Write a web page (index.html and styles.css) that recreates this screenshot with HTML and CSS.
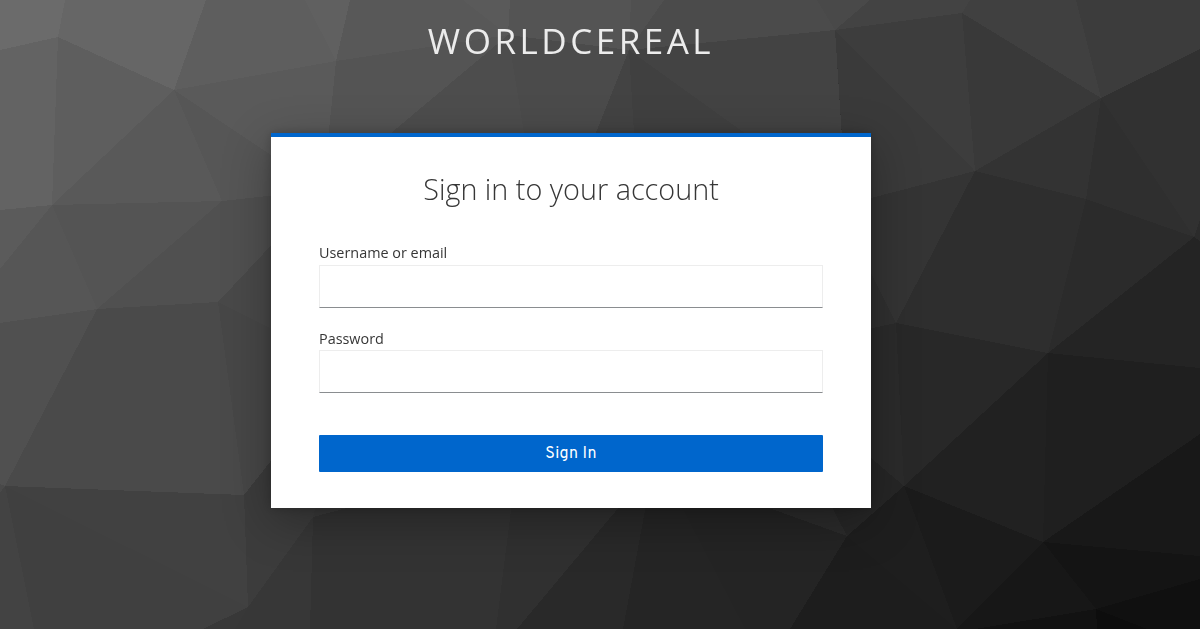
FILE: index.html
```html
<!DOCTYPE html>
<html lang="en">
<head>
<meta charset="utf-8">
<title>Sign in to WorldCereal</title>
<link rel="stylesheet" href="styles.css">
</head>
<body>
<svg class="backdrop" viewBox="0 0 1200 629" aria-hidden="true">
<g class="facets">
<path fill="#6b6b6b" d="M0 0H65L58 37L0 50Z"/>
<path fill="#666" d="M65 0H206L174 90L58 37Z"/>
<path fill="#5e5e5e" d="M206 0H305L336 61L174 90Z"/>
<path fill="#606060" d="M305 0H350L336 61Z"/>
<path fill="#585858" d="M350 0H463L508 35L336 61Z"/>
<path fill="#5a5a5a" d="M463 0H510L508 35Z"/>
<path fill="#545454" d="M510 0H631L629 50L508 35Z"/>
<path fill="#505050" d="M631 0H664L629 50Z"/>
<path fill="#4b4b4b" d="M664 0H817L835 30L629 50Z"/>
<path fill="#494949" d="M817 0H870L835 30Z"/>
<path fill="#434343" d="M870 0H970L962 13L835 30Z"/>
<path fill="#404040" d="M970 0H1076L1101 98L962 13Z"/>
<path fill="#3c3c3c" d="M1076 0H1200V49L1101 98Z"/>
<path fill="#636363" d="M0 50L58 37L52 205L0 210Z"/>
<path fill="#5e5e5e" d="M58 37L174 90L52 205Z"/>
<path fill="#595959" d="M174 90L222 201L52 205Z"/>
<path fill="#5a5a5a" d="M174 90L336 61L323 190Z"/>
<path fill="#565656" d="M174 90L323 190L222 201Z"/>
<path fill="#545454" d="M336 61L508 35L323 190Z"/>
<path fill="#4d4d4d" d="M508 35L323 190L535 200Z"/>
<path fill="#4b4b4b" d="M508 35L629 50L569 200H535Z"/>
<path fill="#434343" d="M629 50L569 200H638Z"/>
<path fill="#404040" d="M629 50L638 200H838Z"/>
<path fill="#434343" d="M629 50L835 30L846 200H838Z"/>
<path fill="#3a3a3a" d="M835 30L975 171L871 198H846Z"/>
<path fill="#3d3d3d" d="M835 30L962 13L975 171Z"/>
<path fill="#393939" d="M962 13L1101 98L975 171Z"/>
<path fill="#333" d="M1101 98L1086 199L975 171Z"/>
<path fill="#2f2f2f" d="M1101 98L1194 237L1086 199Z"/>
<path fill="#313131" d="M1101 98L1200 49V220L1194 237Z"/>
<path fill="#5b5b5b" d="M0 210L52 205L0 269Z"/>
<path fill="#565656" d="M52 205L97 309L0 323V269Z"/>
<path fill="#545454" d="M52 205L222 201L97 309Z"/>
<path fill="#505050" d="M222 201L323 190L218 302L97 309Z"/>
<path fill="#505050" d="M0 323L97 309L5 486L0 484Z"/>
<path fill="#4a4a4a" d="M97 309L218 302L244 495L5 486Z"/>
<path fill="#494949" d="M218 302L323 190V354Z"/>
<path fill="#474747" d="M218 302L323 354V395L244 495Z"/>
<path fill="#494949" d="M0 484L5 486L0 493Z"/>
<path fill="#434343" d="M0 493L5 486L34 629H0Z"/>
<path fill="#404040" d="M5 486L248 607L203 629H34Z"/>
<path fill="#414141" d="M5 486L244 495L248 607Z"/>
<path fill="#3c3c3c" d="M244 495L313 517L248 607Z"/>
<path fill="#3c3c3c" d="M244 495L323 395V480L313 517Z"/>
<path fill="#383838" d="M248 607L235 629H203Z"/>
<path fill="#373737" d="M248 607L313 517L310 629H235Z"/>
<path fill="#3a3a3a" d="M313 517L323 480H410L400 494Z"/>
<path fill="#333" d="M313 517L400 494H513L496 629H310Z"/>
<path fill="#303030" d="M513 494H630L517 629H496Z"/>
<path fill="#292929" d="M630 494H648L623 629H517Z"/>
<path fill="#252525" d="M648 494H675L745 629H623Z"/>
<path fill="#242424" d="M675 494H730L847 536L790 629H745Z"/>
<path fill="#2b2b2b" d="M730 494H825L847 536Z"/>
<path fill="#262626" d="M825 494L850 440L904 486L847 536Z"/>
<path fill="#343434" d="M871 198L975 171L896 323L850 230Z"/>
<path fill="#303030" d="M850 230L896 323L850 333Z"/>
<path fill="#2b2b2b" d="M850 333L896 323L904 486L850 440Z"/>
<path fill="#2e2e2e" d="M975 171L1086 199L1048 353L896 323Z"/>
<path fill="#2b2b2b" d="M1086 199L1194 237L1048 353Z"/>
<path fill="#2b2b2b" d="M1194 237L1200 220V241Z"/>
<path fill="#242424" d="M1194 237L1200 241V368L1048 353Z"/>
<path fill="#282828" d="M896 323L1048 353L904 486Z"/>
<path fill="#212121" d="M1048 353L1043 542L904 486Z"/>
<path fill="#1f1f1f" d="M1048 353L1200 368V434L1043 542Z"/>
<path fill="#181818" d="M1043 542L1200 434V556Z"/>
<path fill="#1e1e1e" d="M847 536L904 486L957 629Z"/>
<path fill="#1d1d1d" d="M847 536L957 629H790Z"/>
<path fill="#1b1b1b" d="M904 486L1043 542L957 629Z"/>
<path fill="#171717" d="M1043 542L1096 609L975 629H957Z"/>
<path fill="#141414" d="M1043 542L1200 556V579L1096 609Z"/>
<path fill="#121212" d="M975 629L1096 609L1097 629Z"/>
<path fill="#0d0d0d" d="M1096 609L1147 629H1097Z"/>
<path fill="#101010" d="M1096 609L1200 579V629H1147Z"/>
</g>
</svg>
<div class="login">
<header class="brand">WorldCereal</header>
<main class="card">
<h1 class="title">Sign in to your account</h1>
<form class="form">
<div class="field">
<label class="label" for="username">Username or email</label>
<input class="input" id="username" type="text">
</div>
<div class="field">
<label class="label" for="password">Password</label>
<input class="input" id="password" type="password">
</div>
<button class="submit" type="button">Sign In</button>
</form>
</main>
</div>
</body>
</html>
```
FILE: styles.css
```css
* { box-sizing: border-box; }
html, body { height: 100%; }
body {
  margin: 0;
  overflow: hidden;
  background: #333;
  font-family: "Open Sans", sans-serif;
}
.backdrop {
  position: fixed;
  inset: 0;
  width: 100%;
  height: 100%;
  z-index: -1;
}
.facets { shape-rendering: crispEdges; }
.login {
  width: 600px;
  margin-left: 271px;
}
.brand {
  height: 133px;
  padding-top: 16px;
  color: #ececec;
  font-size: 35px;
  font-weight: 400;
  line-height: 49px;
  letter-spacing: 3.5px;
  text-align: center;
  text-transform: uppercase;
  white-space: nowrap;
}
.card {
  height: 375px;
  padding: 33px 48px 0;
  border-top: 4px solid #06c;
  background: #fff;
  box-shadow: 0 13px 45px rgba(3, 3, 3, .3), 0 0 10px rgba(3, 3, 3, .2);
}
.title {
  margin: 0;
  color: #363636;
  font-size: 28.8px;
  font-weight: 300;
  line-height: 38px;
  text-align: center;
}
.form {
  display: flex;
  flex-direction: column;
  padding-top: 33px;
}
.field {
  display: flex;
  flex-direction: column;
  height: 85px;
}
.label {
  padding-bottom: 1px;
  color: #363636;
  font-size: 14.4px;
  line-height: 23px;
}
.field + .field .label {
  padding: 1px 0 0;
}
.input {
  height: 43px;
  padding: 0 8px;
  border: 1px solid #ededed;
  border-bottom-color: #8a8d90;
  background: #fff;
  outline: 0;
}
.submit {
  height: 37px;
  margin-top: 24px;
  padding: 0;
  border: 0;
  border-radius: 1px;
  background: #06c;
  color: #fff;
  font: 400 16px/36px Overpass, Roboto, sans-serif;
  letter-spacing: .35px;
}
```
